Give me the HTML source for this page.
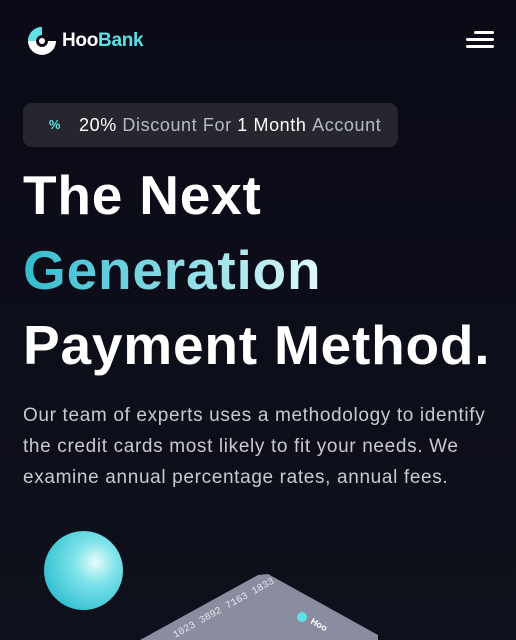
<!DOCTYPE html>
<html><head><style>
*{margin:0;padding:0;box-sizing:border-box}
body{width:516px;height:640px;overflow:hidden;background:linear-gradient(180deg,#0a0b17 0%,#0e101b 100%);font-family:"Liberation Sans",sans-serif;position:relative;color:#fff}
.logo{position:absolute;left:26px;top:25px;display:flex;align-items:center}
.logo span{font-size:19px;font-weight:bold;margin-left:4px;letter-spacing:-0.3px}
.menu{position:absolute;right:22px;top:31px;width:28px}
.menu div{height:3px;background:#fff;margin-bottom:4px;border-radius:2px}
.badge{position:absolute;left:23px;top:103px;width:375px;height:44px;background:#25262e;border-radius:9px;display:flex;align-items:center;padding-left:56px;font-size:18px;letter-spacing:0.6px;color:#b8bac2;white-space:nowrap}
.badge b{color:#fff;font-weight:normal}
.pct{position:absolute;left:22px;top:12px;width:20px;height:20px;color:#5ce1e6;font-size:13px;font-weight:bold;text-align:center;line-height:20px}
h1{position:absolute;left:23px;top:158px;font-size:55px;line-height:75px;font-weight:bold;letter-spacing:0.8px}
.g{background:linear-gradient(90deg,#33bbcf,#def9fa);-webkit-background-clip:text;color:transparent}
p{position:absolute;left:23px;top:400px;width:500px;font-size:19px;line-height:31px;color:#c9cad1;white-space:nowrap;letter-spacing:0.65px}
.ball{position:absolute;left:44px;top:531px;width:79px;height:79px;border-radius:50%;background:radial-gradient(circle at 65% 40%,#e8fbfc 0%,#7fe3ea 30%,#36c2d2 75%,#2aa8ba 100%)}
</style></head><body>
<div class="logo">
<svg width="32" height="32" viewBox="0 0 32 32"><path d="M16 2 A14 14 0 1 0 30 16 L22 16 A6 6 0 1 1 16 10 Z" fill="#fff"/><path d="M16 2 A14 14 0 0 0 2 16 L10 16 A6 6 0 0 1 16 10 Z" fill="#5ce1e6"/><circle cx="16" cy="16" r="3" fill="#fff"/></svg>
<span>Hoo<span style="color:#5ce1e6;margin:0">Bank</span></span>
</div>
<div class="menu"><div style="width:20px;margin-left:8px"></div><div></div><div></div></div>
<div class="badge"><div class="pct">%</div><b>20%</b>&nbsp;Discount For&nbsp;<b>1 Month</b>&nbsp;Account</div>
<h1>The Next<br><span class="g">Generation</span><br>Payment Method.</h1>
<p>Our team of experts uses a methodology to identify<br>the credit cards most likely to fit your needs. We<br>examine annual percentage rates, annual fees.</p>
<div class="ball"></div>
<svg style="position:absolute;left:0;top:560px" width="516" height="80"><polygon points="140,80 258,15 268,14 378,75 378,80" fill="#8b8c9f"/><text x="175" y="78" fill="#e8e8ee" font-size="10" transform="rotate(-29 175 78)" font-family="Liberation Mono">1023 3892 7163 1833</text><circle cx="302" cy="57" r="5" fill="#5ce1e6"/><text x="310" y="63" fill="#fff" font-size="9" font-weight="bold" transform="rotate(29 310 63)">Hoo</text></svg>
</body></html>
